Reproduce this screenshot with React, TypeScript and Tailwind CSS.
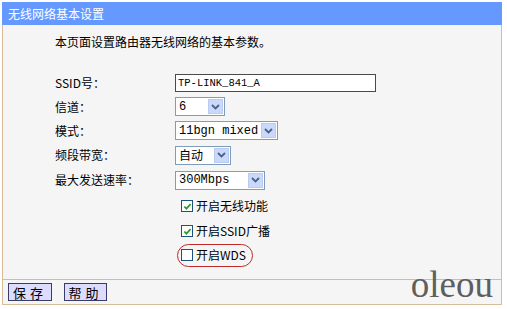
const cjk = "font-['Noto_Sans_CJK_SC','Liberation_Sans',sans-serif]";
const mono = "font-['Liberation_Mono','Noto_Sans_CJK_SC',monospace]";

function Chevron() {
  return (
    <span className="flex h-[15px] w-[15px] items-center justify-center border border-[#b9cbf3] bg-[#c9d8fb]">
      <svg viewBox="0 0 9 6" className="h-[6px] w-[9px]" aria-hidden="true">
        <path d="M1 1l3.5 3.5L8 1" fill="none" stroke="#4d6185" strokeWidth="1.8" />
      </svg>
    </span>
  );
}

function Select({ value, width, cjkText }: { value: string; width: string; cjkText?: boolean }) {
  return (
    <div className={`flex h-[19px] items-center justify-between border border-[#7f9db9] bg-white pl-[3px] pr-px ${width}`}>
      <span className={`${cjkText ? cjk + " text-[12px]" : mono + " text-[12px]"} leading-none text-black`}>{value}</span>
      <Chevron />
    </div>
  );
}

function Check({ checked }: { checked: boolean }) {
  return (
    <span className="flex h-[12px] w-[12px] items-center justify-center border border-[#1c5180] bg-white">
      {checked && (
        <svg viewBox="0 0 10 10" className="h-[9px] w-[9px]" aria-hidden="true">
          <path d="M1.5 5l2.3 2.4L8.5 2.2" fill="none" stroke="#21a121" strokeWidth="2" />
        </svg>
      )}
    </span>
  );
}

function Row({ label, h, children }: { label: string; h: string; children: React.ReactNode }) {
  return (
    <div className={`flex items-center ${h}`}>
      <span className="w-[120px] text-[12px] leading-none">{label}</span>
      {children}
    </div>
  );
}

export default function App() {
  return (
    <div className={`h-[309px] w-[507px] bg-white pl-[2px] pt-[2px] text-black ${cjk}`}>
      <div className="flex w-[500px] flex-col">
        <div className="flex h-[23px] items-center bg-[#6699ff] pl-[6px] text-[12px] text-white">无线网络基本设置</div>
        <div className="h-[254px] border-x border-[#d8bc9a] bg-[#f5f5f5] pl-[52px]">
          <p className="pt-[10px] text-[12px] leading-[14px]">本页面设置路由器无线网络的基本参数。</p>
          <div className="mt-[22px] flex flex-col">
            <Row label="SSID号：" h="h-[24px]">
              <div className="flex h-[18px] w-[201px] items-center border border-[#4a4a4a] bg-white pl-[2px]">
                <span className={`${mono} text-[10.5px] leading-none`}>TP-LINK_841_A</span>
              </div>
            </Row>
            <Row label="信道：" h="h-[23px]">
              <Select value="6" width="w-[50px]" />
            </Row>
            <Row label="模式：" h="h-[25px]">
              <Select value="11bgn mixed" width="w-[103px]" />
            </Row>
            <Row label="频段带宽：" h="h-[24px]">
              <Select value="自动" width="w-[56px]" cjkText />
            </Row>
            <Row label="最大发送速率：" h="h-[26px]">
              <Select value="300Mbps" width="w-[90px]" />
            </Row>
            <div className="flex h-[26px] items-center gap-[3px] pl-[126px] text-[12px] leading-none">
              <Check checked />
              <span>开启无线功能</span>
            </div>
            <div className="flex h-[24px] items-center gap-[3px] pl-[126px] text-[12px] leading-none">
              <Check checked />
              <span>开启SSID广播</span>
            </div>
            <div className="flex h-[24px] items-center pl-[122px]">
              <div className="flex h-[23px] items-center gap-[3px] rounded-[12px] border border-[#c02a2a] pl-[3px] pr-[6px] text-[12px] leading-none">
                <Check checked={false} />
                <span>开启WDS</span>
              </div>
            </div>
          </div>
        </div>
        <div className="relative flex h-[26px] items-center gap-[12px] border border-[#d8bc9a] bg-[#f5f5f5] pl-[5px]">
          <button className="flex h-[18px] w-[44px] items-center justify-center border border-[#3b3b6b] bg-[#dcdcff] text-[13px] leading-none tracking-[4px]">保存</button>
          <button className="flex h-[18px] w-[43px] items-center justify-center border border-[#3b3b6b] bg-[#dcdcff] text-[13px] leading-none tracking-[4px]">帮助</button>
          <span className="absolute bottom-[4px] right-[8px] font-['Liberation_Serif',serif] text-[37px] leading-[30px] text-[#5e5e5e]">oleou</span>
        </div>
      </div>
    </div>
  );
}
